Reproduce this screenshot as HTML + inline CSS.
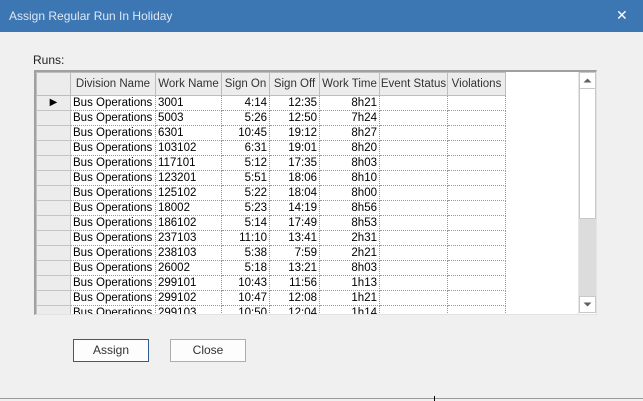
<!DOCTYPE html>
<html><head><style>
*{margin:0;padding:0;box-sizing:border-box}
body{width:643px;height:401px;background:#f0f0f0;font-family:"Liberation Sans",sans-serif;font-size:12px;position:relative;overflow:hidden;color:#000}
.title{position:absolute;left:0;top:0;width:643px;height:32px;background:#3c77b3;color:#dfe8f2;font-size:12px}
.title span{position:absolute;left:9px;top:9px}
.title b{position:absolute;left:616px;top:7px;font-weight:normal;font-size:14px;color:#fff}
.lbl{position:absolute;left:33px;top:53px;color:#222}
.grid{position:absolute;left:34px;top:70px;width:563px;height:245px;background:#fff;border-top:2px solid #a0a0a0;border-left:2px solid #a0a0a0;border-right:1px solid #e3e3e3;border-bottom:1px solid #e3e3e3;overflow:hidden}
table{border-collapse:collapse;position:absolute;left:0;top:0;table-layout:fixed;width:469px}
td,th{height:15px;padding:0 2px;white-space:nowrap;overflow:hidden;font-weight:normal;font-size:11.5px;line-height:14px;border-right:1px dotted #999;border-bottom:1px dotted #999}
th{height:23px;background:#ececec;color:#333;border:1px solid #bdbdbd;text-align:center;padding:0}
td.rh{background:#ececec;border:1px solid #c4c4c4;border-top:none}
td.r{text-align:right}
.sb{position:absolute;left:578px;top:72px;width:18px;height:242px;background:#fff;border-left:1px solid #e5e5e5}
.btn{position:absolute;top:339px;height:23px;width:76px;background:#fdfdfd;border:1px solid #adadad;text-align:center;line-height:21px;color:#333}
</style></head><body>
<div class="title"><span>Assign Regular Run In Holiday</span><b>✕</b></div>
<div class="lbl">Runs:</div>
<div class="grid">
<table>
<colgroup><col style="width:34px"><col style="width:85px"><col style="width:66px"><col style="width:48px"><col style="width:50px"><col style="width:60px"><col style="width:68px"><col style="width:58px"></colgroup>
<tr><th></th><th>Division Name</th><th>Work Name</th><th>Sign On</th><th>Sign Off</th><th>Work Time</th><th>Event Status</th><th>Violations</th></tr>
<tr><td class="rh" style="text-align:center;font-size:10px">▶</td><td>Bus Operations</td><td>3001</td><td class="r">4:14</td><td class="r">12:35</td><td class="r">8h21</td><td></td><td></td></tr>
<tr><td class="rh"></td><td>Bus Operations</td><td>5003</td><td class="r">5:26</td><td class="r">12:50</td><td class="r">7h24</td><td></td><td></td></tr>
<tr><td class="rh"></td><td>Bus Operations</td><td>6301</td><td class="r">10:45</td><td class="r">19:12</td><td class="r">8h27</td><td></td><td></td></tr>
<tr><td class="rh"></td><td>Bus Operations</td><td>103102</td><td class="r">6:31</td><td class="r">19:01</td><td class="r">8h20</td><td></td><td></td></tr>
<tr><td class="rh"></td><td>Bus Operations</td><td>117101</td><td class="r">5:12</td><td class="r">17:35</td><td class="r">8h03</td><td></td><td></td></tr>
<tr><td class="rh"></td><td>Bus Operations</td><td>123201</td><td class="r">5:51</td><td class="r">18:06</td><td class="r">8h10</td><td></td><td></td></tr>
<tr><td class="rh"></td><td>Bus Operations</td><td>125102</td><td class="r">5:22</td><td class="r">18:04</td><td class="r">8h00</td><td></td><td></td></tr>
<tr><td class="rh"></td><td>Bus Operations</td><td>18002</td><td class="r">5:23</td><td class="r">14:19</td><td class="r">8h56</td><td></td><td></td></tr>
<tr><td class="rh"></td><td>Bus Operations</td><td>186102</td><td class="r">5:14</td><td class="r">17:49</td><td class="r">8h53</td><td></td><td></td></tr>
<tr><td class="rh"></td><td>Bus Operations</td><td>237103</td><td class="r">11:10</td><td class="r">13:41</td><td class="r">2h31</td><td></td><td></td></tr>
<tr><td class="rh"></td><td>Bus Operations</td><td>238103</td><td class="r">5:38</td><td class="r">7:59</td><td class="r">2h21</td><td></td><td></td></tr>
<tr><td class="rh"></td><td>Bus Operations</td><td>26002</td><td class="r">5:18</td><td class="r">13:21</td><td class="r">8h03</td><td></td><td></td></tr>
<tr><td class="rh"></td><td>Bus Operations</td><td>299101</td><td class="r">10:43</td><td class="r">11:56</td><td class="r">1h13</td><td></td><td></td></tr>
<tr><td class="rh"></td><td>Bus Operations</td><td>299102</td><td class="r">10:47</td><td class="r">12:08</td><td class="r">1h21</td><td></td><td></td></tr>
<tr><td class="rh"></td><td>Bus Operations</td><td>299103</td><td class="r">10:50</td><td class="r">12:04</td><td class="r">1h14</td><td></td><td></td></tr>
</table>
</div>
<div class="sb">
<div style="position:absolute;left:0;top:0;width:17px;height:17px;border:1px solid #c8c8c8;background:#fff"><svg width="15" height="15" style="position:absolute;left:0;top:0"><path d="M3.5 9.5L7.5 5.5L11.5 9.5Z" fill="#606060"/></svg></div>
<div style="position:absolute;left:0;top:16px;width:17px;height:131px;border:1px solid #c8c8c8;background:#fff"></div>
<div style="position:absolute;left:0;top:147px;width:17px;height:77px;background:#dcdcdc"></div>
<div style="position:absolute;left:0;top:224px;width:17px;height:17px;border:1px solid #c8c8c8;background:#fff"><svg width="15" height="15" style="position:absolute;left:0;top:0"><path d="M3.5 5.5L7.5 9.5L11.5 5.5Z" fill="#606060"/></svg></div>
</div>
<div class="btn" style="left:73px;border-color:#2f5d8f">Assign</div>
<div class="btn" style="left:170px">Close</div>
<div style="position:absolute;left:0;top:398px;width:643px;height:3px;border-top:1px solid #9a9a9a;background:#f0f0f0"></div>
<div style="position:absolute;left:434px;top:396px;width:1px;height:5px;background:#000"></div>
</body></html>
